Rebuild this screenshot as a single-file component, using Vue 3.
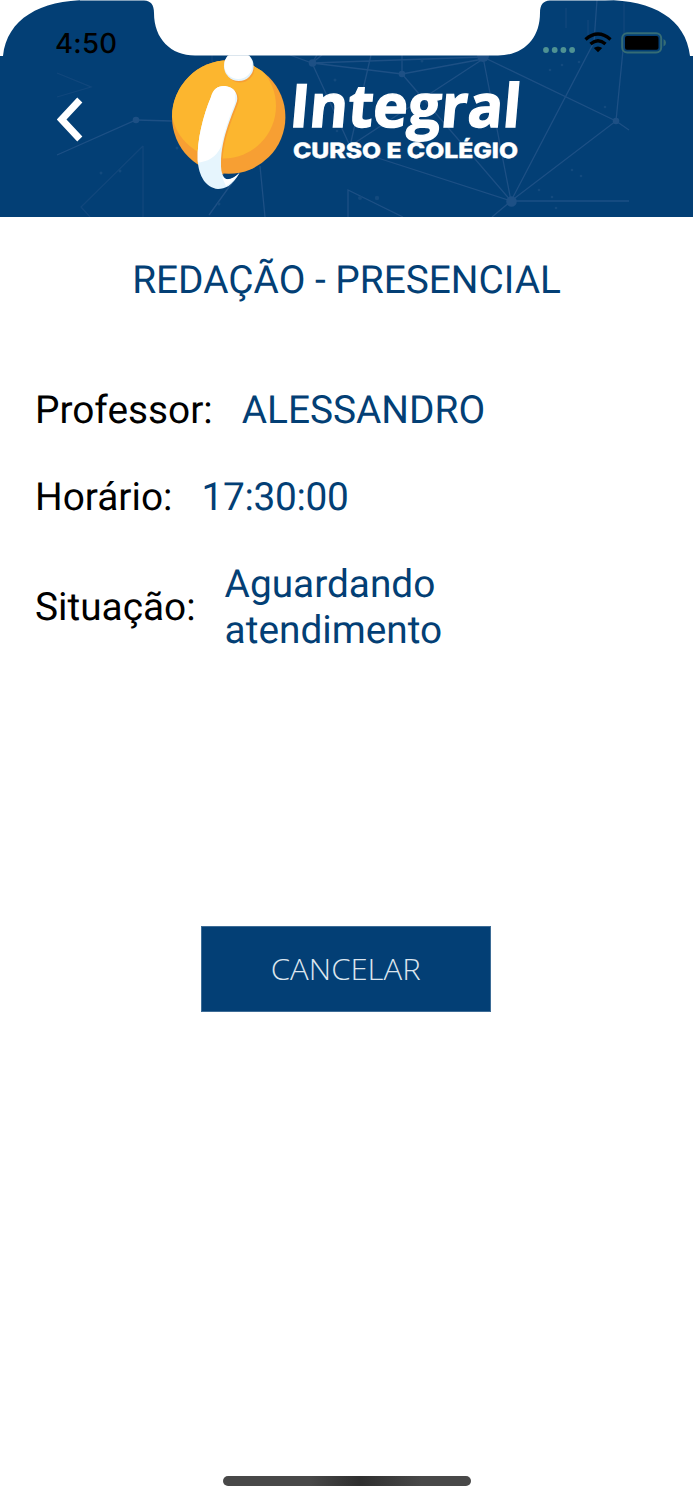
<template>
  <div class="screen">
    <header class="header">
      <!-- Constellation pattern -->
      <svg class="pattern" viewBox="0 0 693 217" aria-hidden="true">
        <g class="pattern-lines">
          <path class="faint" d="M57 73 L91 87 L57 97 M143 146 V217 M143 146 L81 207 L90 217 M212 55 V80 M566 8 V28 M588 20 V35 M624 3 V50" />
          <path d="M57 155 L136 120 L172 121" />
          <path d="M239 173 L209 215 M260 166 L265 217 M290 55 L312 63 L322 55 M312 63 L317 55" />
          <path d="M312 63 L483 57 M312 63 L402 74 L483 59 L350 146 L312 63 M402 74 V55 M371 55 L350 146" />
          <path d="M402 74 L511 201 L350 149 M483 57 L511 201 M483 57 L616 121 L629 130" />
          <path d="M511 201 L594 42 L597 0 M511 201 L616 121 L623 50 M511 201 H629 M511 201 L492 217" />
          <path d="M348 217 V190 L403 217" />
        </g>
        <g class="pattern-dots">
          <circle cx="136" cy="120" r="3.3" />
          <circle cx="312.5" cy="63" r="3.8" />
          <circle cx="402" cy="74" r="3.3" />
          <circle cx="483" cy="56" r="6" />
          <circle cx="511.5" cy="201.5" r="5.3" />
          <circle cx="616" cy="121" r="3.3" />
        </g>
        <g class="pattern-specks">
          <circle v-for="(dot, i) in specks" :key="i" :cx="dot[0]" :cy="dot[1]" :r="dot[2]" />
        </g>
      </svg>

      <!-- Logo -->
      <svg class="logo" viewBox="0 0 693 217" role="img" aria-label="Integral Curso e Colégio">
        <defs>
          <clipPath id="ball">
            <circle cx="228.7" cy="117" r="56.7" />
          </clipPath>
          <clipPath id="stem">
            <path :d="stemPath" />
          </clipPath>
          <clipPath id="below-notch">
            <rect x="0" y="55.5" width="693" height="162" />
          </clipPath>
        </defs>
        <circle cx="228.7" cy="117" r="56.7" fill="#f79f33" />
        <circle cx="223.5" cy="106" r="52.5" fill="#fcb62f" clip-path="url(#ball)" />
        <g clip-path="url(#below-notch)">
          <circle cx="240" cy="68" r="14.5" fill="#f79f33" clip-path="url(#ball)" />
          <circle cx="238.8" cy="66.3" r="14.8" fill="#e3f3fc" />
          <circle cx="238.3" cy="65" r="14" fill="#fff" />
        </g>
        <path :d="stemPath" fill="#f79f33" transform="translate(1.5 1)" clip-path="url(#ball)" />
        <path :d="stemPath" fill="#e6f5fd" />
        <path
          d="M190 80 H236 L235 103 C229 118 224 132 221 147 C214 160 205 163 190 163 Z"
          fill="#fff"
          clip-path="url(#stem)"
        />
        <path d="M221.500 176 C226 182 233 179 239.500 173 C235 179 230 184 226 186 Z" fill="#fff" />
        <text class="logo-name" transform="translate(288.5 126.5) skewX(-5)" textLength="231" lengthAdjust="spacingAndGlyphs">Integral</text>
        <text class="logo-tagline" x="293" y="158" textLength="225" lengthAdjust="spacingAndGlyphs">CURSO E COLÉGIO</text>
      </svg>

      <!-- White corners and notch of the device -->
      <svg class="notch" viewBox="0 0 693 56" aria-hidden="true">
        <path
          d="M0 0 H88 C40 0 7 19 3 56 H0 Z M693 0 H605 C653 0 686 19 690 56 H693 Z M80 0 H613 V.6 H550 C543 1 540 5 540 13 C540 39 523 55.500 498 55.500 H195 C171 55.500 154 39 154 13 C154 5 151 1 144 .6 H80 Z"
          fill="#fff"
        />
      </svg>

      <div class="status-bar">
        <span class="time">4:50</span>
        <div class="status-icons">
          <svg class="signal" viewBox="0 0 33 6">
            <circle v-for="n in 4" :key="n" :cx="n * 8.7 - 5.7" cy="3" r="2.9" />
          </svg>
          <svg class="wifi" viewBox="0 0 28 21">
            <path d="M1.500 7.500 Q14 -3.500 26.500 7.500" />
            <path d="M6.500 12 Q14 5.500 21.500 12" />
            <path class="wifi-dot" d="M9.800 16 Q14 12.800 18.200 16 L14 20.300 Z" />
          </svg>
          <svg class="battery" viewBox="0 0 46 22">
            <rect x="1.2" y="1.2" width="39" height="19.2" rx="5" />
            <rect class="battery-level" x="4" y="4" width="33.5" height="13.8" rx="2" />
            <path d="M42.500 7 Q45 8 45 10.800 Q45 13.500 42.500 14.500 Z" />
          </svg>
        </div>
      </div>

      <button class="back" aria-label="Voltar">
        <svg viewBox="0 0 26 46">
          <path d="M22.800 3 L4.600 22.500 L22.800 42" />
        </svg>
      </button>
    </header>

    <main class="content">
      <h1 class="title">REDAÇÃO - PRESENCIAL</h1>

      <div class="details">
        <div v-for="item in details" :key="item.label" class="row">
          <span class="label">{{ item.label }}</span>
          <span class="value" :class="{ numeric: item.numeric }">{{ item.value }}</span>
        </div>
      </div>

      <button class="cancel"><span>CANCELAR</span></button>
    </main>

    <div class="home-indicator"></div>
  </div>
</template>

<script setup>
const details = [
  { label: 'Professor:', value: 'ALESSANDRO' },
  { label: 'Horário:', value: '17:30:00', numeric: true },
  { label: 'Situação:', value: 'Aguardando atendimento' },
];

// x, y, radius
const specks = [
  [101, 173, 1.5], [120, 171, 1.5], [177, 148, 1.5], [219, 204, 1.5],
  [335, 80, 1.5], [337, 131, 1.3], [422, 61, 1.5], [360, 198, 2],
  [377, 198, 2.2], [550, 70, 1.3], [562, 65, 1.3], [579, 62, 1.3],
  [605, 107, 1.3], [572, 170, 1.3], [581, 176, 1.3], [539, 190, 1.3],
  [552, 197, 1.3], [556, 208, 1.3],
];

const stemPath =
  'M211 97 C213 89 218 85.500 225 86 C234 87 238.500 94 237 101 C234 111 221 137 221 163 C220.500 181 229 184 239.500 173 C232 186 225 189 218 189 C206 188 198.500 176 197.700 160 C197 140 203 116 211 97 Z';
</script>

<style>
body {
  background: #fff;
}
</style>

<style scoped>
.screen {
  display: flex;
  flex-direction: column;
  width: 693px;
  height: 1500px;
  background: #fff;
  font-family: Roboto, sans-serif;
  text-rendering: geometricPrecision;
  overflow: hidden;
}

button {
  border: 0;
  background: none;
  padding: 0;
}

svg {
  display: block;
}

.header {
  position: relative;
  flex: none;
  height: 217px;
  background: #033f75;
}

/* Full-size artwork layers behind the status bar */
.pattern,
.logo,
.notch {
  position: absolute;
  top: 0;
  left: 0;
  width: 693px;
}

.pattern-lines {
  fill: none;
  stroke: #1d5085;
  stroke-width: 1.3;
}

.pattern-lines .faint {
  stroke: #11477c;
}

.pattern-dots {
  fill: #1d5085;
}

.pattern-specks {
  fill: #134a7e;
}

.logo-name {
  font: 700 59.5px "Open Sans", sans-serif;
  fill: #fff;
  stroke: #fff;
  stroke-width: 1.4px;
}

.logo-tagline {
  font: 800 21px Inter, sans-serif;
  fill: #fff;
  stroke: #fff;
  stroke-width: 0.4px;
}

.status-bar {
  position: relative;
  display: flex;
  justify-content: space-between;
  height: 56px;
  padding: 26px 26px 0 55px;
  box-sizing: border-box;
}

.time {
  font: 500 27.5px/34px Inter, sans-serif;
  letter-spacing: 0.3px;
  color: #000;
}

.status-icons {
  display: flex;
  align-items: flex-start;
  padding-top: 6px;
}

.signal {
  width: 33px;
  height: 6px;
  margin: 15px 8px 0 0;
  fill: #4f9293;
}

.wifi {
  width: 28px;
  height: 21px;
  margin-right: 9px;
  fill: none;
  stroke: #000;
  stroke-width: 3.4;
}

.wifi .wifi-dot {
  fill: #000;
  stroke: none;
}

.battery {
  width: 46px;
  height: 22px;
  fill: #356c75;
}

.battery rect {
  fill: none;
  stroke: #356c75;
  stroke-width: 2;
}

.battery .battery-level {
  fill: #000;
  stroke: none;
}

.back {
  position: relative;
  display: block;
  width: 26px;
  height: 46px;
  margin: 41px 0 0 57px;
}

.back path {
  fill: none;
  stroke: #fff;
  stroke-width: 7;
}

.content {
  display: flex;
  flex-direction: column;
  align-items: center;
  flex: 1;
  padding-top: 41px;
}

.title {
  margin: 0;
  font-size: 38.8px;
  font-weight: 400;
  line-height: 46px;
  color: #033f75;
}

.details {
  display: flex;
  flex-direction: column;
  gap: 41px;
  align-self: stretch;
  padding: 84px 180px 0 35px;
  font-size: 38.8px;
  line-height: 46px;
}

.row {
  display: flex;
  align-items: center;
  gap: 29px;
}

.label {
  color: #000;
}

.value {
  max-width: 260px;
  color: #033f75;
}

.value.numeric {
  letter-spacing: -0.3px;
}

.cancel {
  width: 290px;
  height: 86px;
  margin: 272px 1px 0 0;
  border: 1px solid #3d6c96;
  background: #033f75;
  color: #dbe5ee;
  font: 300 28.5px "Open Sans", sans-serif;
}

/* The button lettering is slightly extended */
.cancel span {
  display: inline-block;
  transform: scaleX(1.09);
}

.home-indicator {
  flex: none;
  align-self: center;
  width: 248px;
  height: 10px;
  margin-bottom: 14px;
  border-radius: 5px;
  background: linear-gradient(90deg, #484848 35%, #2e2e2e 55%, #484848 80%);
}
</style>
